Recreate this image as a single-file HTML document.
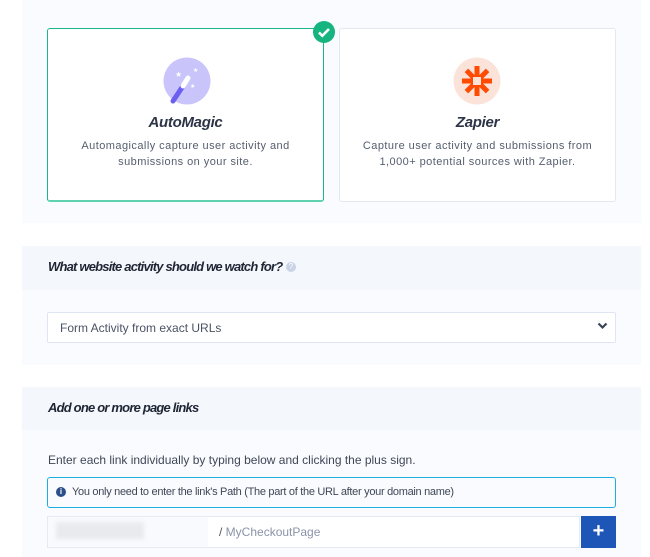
<!DOCTYPE html>
<html><head><meta charset="utf-8"><style>
*{box-sizing:border-box;margin:0;padding:0}
body{width:650px;height:557px;background:#fff;font-family:"Liberation Sans",sans-serif;position:relative;overflow:hidden;color:#3b4456}
.abs{position:absolute}
.card{position:absolute;top:28px;width:277px;height:174px;background:#fff;border:1px solid #e3e7ee;border-radius:3px;text-align:center}
.card h3{position:absolute;top:85px;width:100%;font-size:15px;font-style:italic;font-weight:bold;color:#2c3446;letter-spacing:-0.3px}
.card p{position:absolute;top:109px;width:100%;font-size:11px;line-height:16px;color:#555e6e;letter-spacing:0.45px}
.hdr{font-size:13px;font-style:italic;font-weight:bold;color:#1f2533;letter-spacing:-0.8px}
</style></head><body>
<div class="abs" style="left:22px;top:0;width:619px;height:223px;background:#f9fbfe"></div>
<div class="card" style="left:47px;border:1px solid #1ab58a;border-bottom:2px solid #5fd3b0">
<svg class="abs" style="left:115px;top:28px" width="48" height="48" viewBox="0 0 48 48"><circle cx="24" cy="24" r="23.5" fill="#c9c5fb"/>
<path d="M10 44 L20 29" stroke="#6a5ff0" stroke-width="5" stroke-linecap="round"/>
<path d="M20 29 L25 21" stroke="#fff" stroke-width="5" stroke-linecap="round"/>
<text x="12" y="20" font-size="8" fill="#fff">★</text><text x="30" y="15" font-size="6" fill="#fff">★</text><text x="27" y="31" font-size="6" fill="#fff">★</text></svg>
<h3>AutoMagic</h3><p>Automagically capture user activity and<br>submissions on your site.</p></div>
<svg class="abs" style="left:313px;top:21px" width="22" height="22" viewBox="0 0 22 22"><circle cx="11" cy="11" r="11" fill="#16b47f"/><path d="M6 11.5l3.3 3.3L16 8" stroke="#fff" stroke-width="2.6" fill="none"/></svg>
<div class="card" style="left:339px">
<svg class="abs" style="left:113px;top:28px" width="48" height="48" viewBox="0 0 48 48"><circle cx="24" cy="24" r="23.5" fill="#fbe3da"/>
<g stroke="#ff4a00" stroke-width="5"><path d="M24 9v30M9 24h30M13.4 13.4l21.2 21.2M34.6 13.4L13.4 34.6"/></g><rect x="20" y="20" width="8" height="8" fill="#fbe3da"/></svg>
<h3>Zapier</h3><p>Capture user activity and submissions from<br>1,000+ potential sources with Zapier.</p></div>

<div class="abs" style="left:22px;top:246px;width:619px;height:44px;background:#f4f7fc"></div>
<div class="abs" style="left:22px;top:290px;width:619px;height:75px;background:#f9fbfe"></div>
<div class="abs hdr" style="left:48px;top:259px">What website activity should we watch for?</div>
<div class="abs" style="left:286px;top:262px;width:10px;height:10px;border-radius:50%;background:#c8d3e6;color:#fff;font-size:8px;text-align:center;line-height:10px">?</div>
<div class="abs" style="left:47px;top:312px;width:569px;height:31px;background:#fff;border:1px solid #dfe6f2;border-radius:2px;font-size:12px;color:#4a5365;padding:8px 12px">Form Activity from exact URLs</div>
<svg class="abs" style="left:597px;top:322px" width="11" height="8" viewBox="0 0 11 8"><path d="M1.5 1.5l4 4 4-4" stroke="#3b4456" stroke-width="2.2" fill="none"/></svg>

<div class="abs" style="left:22px;top:387px;width:619px;height:43px;background:#f4f7fc"></div>
<div class="abs" style="left:22px;top:430px;width:619px;height:127px;background:#f9fbfe"></div>
<div class="abs hdr" style="left:48px;top:400px">Add one or more page links</div>
<div class="abs" style="left:48px;top:453px;font-size:12px;color:#3f4757">Enter each link individually by typing below and clicking the plus sign.</div>
<div class="abs" style="left:47px;top:477px;width:569px;height:31px;border:1px solid #1ab0e0;border-radius:3px;background:#f9fbfe;font-size:11px;color:#3f4757;padding:8px 0 0 24px;letter-spacing:-0.3px">You only need to enter the link's Path (The part of the URL after your domain name)</div>
<div class="abs" style="left:56px;top:487px;width:10px;height:10px;border-radius:50%;background:#2b4f8a;color:#fff;font-size:8px;font-weight:bold;text-align:center;line-height:10px">i</div>
<div class="abs" style="left:47px;top:516px;width:533px;height:32px;border:1px solid #e6eaf2;background:#f9fafd"></div>
<div class="abs" style="left:56px;top:522px;width:88px;height:17px;background:#e9eaee;filter:blur(2px)"></div>
<div class="abs" style="left:208px;top:517px;width:372px;height:30px;background:#fff;border-right:1px solid #e6eaf2;font-size:12px;color:#8a93a8;padding:8px 8px 8px 11px"><span style="color:#555">/</span> MyCheckoutPage</div>
<div class="abs" style="left:581px;top:516px;width:35px;height:32px;background:#1e56b8;color:#fff;font-size:20px;font-weight:bold;text-align:center;line-height:31px">+</div>
</body></html>
